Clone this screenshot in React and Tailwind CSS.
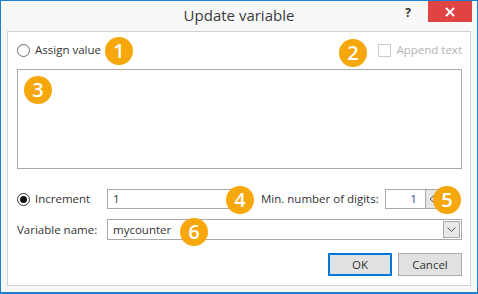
import React from 'react';

function Badge({ n, className }) {
  return (
    <div
      className={`absolute w-[28px] h-[28px] rounded-full bg-[#f6a70b] text-white flex items-center justify-center text-[20px] leading-none font-semibold ${className}`}
    >
      {n}
    </div>
  );
}

export default function App() {
  return (
    <div
      className="w-[478px] h-[294px] bg-[#f8f8f8] border border-b-2 border-[#1b7fd4] flex flex-col text-[#333] text-[11.5px]"
      style={{ fontFamily: '"Segoe UI", "Open Sans", sans-serif' }}
    >
      {/* title bar */}
      <div className="h-[30px] grid grid-cols-[1fr_auto_1fr]">
        <div />
        <div className="text-[15px] text-[#3a3a3a] pt-[3px]">Update variable</div>
        <div className="flex justify-end items-start pr-[5px]">
          <span className="text-[12px] font-bold text-[#333] mt-[3px] mr-[17px]">?</span>
          <button className="w-[44px] h-[21px] bg-[#e04343] flex items-center justify-center">
            <svg width="10" height="10" viewBox="0 0 10 10">
              <path d="M1 1 L9 9 M9 1 L1 9" stroke="#fff" strokeWidth="2" />
            </svg>
          </button>
        </div>
      </div>

      {/* main panel */}
      <div className="relative mx-[6px] h-[255px] bg-white border border-[#d2d2d2] pl-[9px] pr-[8px] pt-[9px] flex flex-col">
        {/* assign row */}
        <div className="h-[18px] flex items-center justify-between">
          <label className="flex items-center gap-[5px]">
            <span className="w-[13px] h-[13px] rounded-full border border-[#6b6b6b] bg-white" />
            <span>Assign value</span>
          </label>
          <label className="flex items-center gap-[5px] text-[#b3b3b3]">
            <span className="w-[13px] h-[13px] border border-[#cccccc] bg-white" />
            <span>Append text</span>
          </label>
        </div>

        <textarea className="mt-[10px] h-[100px] w-full border border-[#a9a9a9] resize-none outline-none" />

        {/* increment row */}
        <div className="mt-[20px] h-[20px] flex items-center">
          <label className="w-[90px] flex items-center gap-[5px]">
            <span className="w-[13px] h-[13px] rounded-full border border-[#333] bg-white flex items-center justify-center">
              <span className="w-[7px] h-[7px] rounded-full bg-[#111]" />
            </span>
            <span>Increment</span>
          </label>
          <div className="w-[140px] h-[20px] border border-[#a9a9a9] flex items-center px-[5px]">1</div>
          <span className="ml-[14px]">Min. number of digits:</span>
          <div className="ml-[6px] w-[54px] h-[20px] border border-[#a9a9a9] flex items-center justify-end">
            <span className="mr-[8px] text-[#1f4f8a]">1</span>
            <span className="w-[13px] h-[18px] bg-[#e6e6e6] border-l border-[#b0b0b0] flex items-center justify-center">
              <svg width="6" height="8" viewBox="0 0 6 8">
                <path d="M5 0.5 L1 4 L5 7.5" fill="none" stroke="#555" strokeWidth="1" />
              </svg>
            </span>
          </div>
        </div>

        {/* variable name row */}
        <div className="mt-[10px] h-[21px] flex items-center">
          <span className="w-[90px]">Variable name:</span>
          <div className="flex-1 h-[21px] border border-[#a9a9a9] flex items-center justify-between pl-[5px] pr-[1px]">
            <span>mycounter</span>
            <span className="w-[17px] h-[17px] bg-[#e8e8e8] border border-[#a9a9a9] flex items-center justify-center">
              <svg width="9" height="5" viewBox="0 0 9 5">
                <path d="M0.5 0.5 L4.5 4.5 L8.5 0.5" fill="none" stroke="#555" strokeWidth="1" />
              </svg>
            </span>
          </div>
        </div>

        {/* buttons */}
        <div className="mt-[13px] flex justify-end gap-[6px]">
          <button className="w-[64px] h-[23px] bg-[#e1e1e1] border border-[#0078d7] shadow-[inset_0_0_0_1px_#0078d7]">OK</button>
          <button className="w-[64px] h-[23px] bg-[#e1e1e1] border border-[#adadad]">Cancel</button>
        </div>

        <Badge n="1" className="left-[97px] top-[5px]" />
        <Badge n="2" className="left-[331px] top-[7px]" />
        <Badge n="3" className="left-[16px] top-[44px]" />
        <Badge n="4" className="left-[218px] top-[154px]" />
        <Badge n="5" className="left-[425px] top-[154px]" />
        <Badge n="6" className="left-[172px] top-[186px]" />
      </div>
    </div>
  );
}
